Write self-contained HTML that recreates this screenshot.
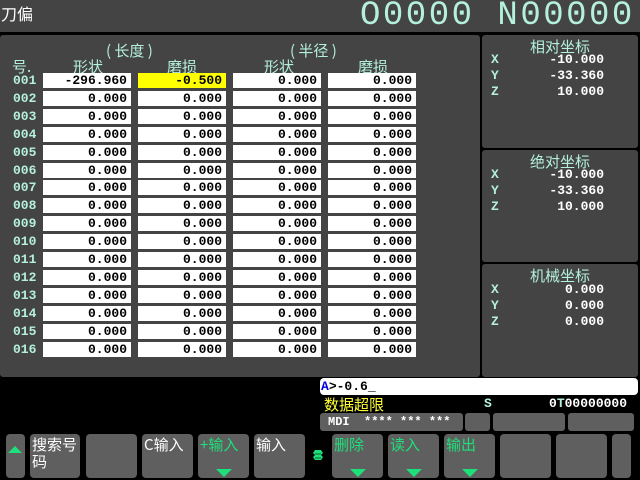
<!DOCTYPE html><html><head><meta charset="utf-8"><style>
*{margin:0;padding:0;box-sizing:border-box}
body{width:640px;height:480px;background:#000;position:relative;overflow:hidden;font-family:"Liberation Mono","WenQuanYi Zen Hei",monospace;}
.a{position:absolute}
.cj{font-family:"WenQuanYi Zen Hei","Noto Sans CJK SC",sans-serif}
.m{color:#b4f0dc}
.cell{position:absolute;height:15px;background:#fff;color:#000;font-weight:bold;font-size:13px;line-height:15px;text-align:right;padding-right:4px}
.num{position:absolute;left:13px;font-size:13px;font-weight:bold;color:#b4f0dc;line-height:15px}
.pan{position:absolute;background:#444;border-radius:3px}
.k{position:absolute;top:434px;height:44px;background:#5f5f5f;border-radius:4px;color:#fff;font-size:15px;line-height:17px;padding:2px}
.g{color:#1ee07a}
.tri{position:absolute;bottom:1px;left:50%;margin-left:-8px;width:0;height:0;border-left:8px solid transparent;border-right:8px solid transparent;border-top:8px solid #1ee07a}
.ax{position:absolute;font-size:13px;font-weight:bold;line-height:16px}
</style></head><body>
<div class="a" style="left:0;top:0;width:640px;height:32px;background:#444"></div>
<div class="a cj" style="left:1px;top:1px;color:#fff;font-size:16px">刀偏</div>
<div class="a m" style="left:360px;top:-1px;font-size:34px;letter-spacing:2.5px;line-height:34px;font-family:'Liberation Mono',monospace">O0000 N00000</div>
<div class="pan" style="left:0;top:35px;width:480px;height:342px"></div>
<div class="pan" style="left:482px;top:35px;width:156px;height:113px"></div>
<div class="pan" style="left:482px;top:150px;width:156px;height:112px"></div>
<div class="pan" style="left:482px;top:264px;width:156px;height:113px"></div>
<div class="a cj m" style="left:106px;top:40px;font-size:15px">( 长度 )</div>
<div class="a cj m" style="left:290px;top:40px;font-size:15px">( 半径 )</div>
<div class="a cj m" style="left:12px;top:56px;font-size:15px">号.</div>
<div class="a cj m" style="left:73px;top:56px;font-size:15px">形状</div>
<div class="a cj m" style="left:167px;top:56px;font-size:15px">磨损</div>
<div class="a cj m" style="left:264px;top:56px;font-size:15px">形状</div>
<div class="a cj m" style="left:358px;top:56px;font-size:15px">磨损</div>
<div id="rows"></div>
<script>
var h='';for(var i=1;i<=16;i++){var t=Math.round(73+(i-1)*17.9);var n=('00'+i).slice(-3);
h+='<div class="num" style="top:'+t+'px">'+n+'</div>';
var v=[i==1?'-296.960':'0.000',i==1?'-0.500':'0.000','0.000','0.000'];var xs=[43,138,233,328];
for(var j=0;j<4;j++)h+='<div class="cell" style="left:'+xs[j]+'px;top:'+t+'px;width:88px;'+(i==1&&j==1?'background:#ffff00':'')+'">'+v[j]+'</div>';}
document.getElementById('rows').innerHTML=h;
</script>
<div class="a cj m" style="left:530px;top:36px;font-size:15px">相对坐标</div>
<div class="a cj m" style="left:530px;top:151px;font-size:15px">绝对坐标</div>
<div class="a cj m" style="left:530px;top:265px;font-size:15px">机械坐标</div>
<div class="ax m" style="left:491px;top:52px">X<br>Y<br>Z</div>
<div class="ax" style="left:520px;top:52px;width:84px;text-align:right;color:#fff">-10.000<br>-33.360<br>10.000</div>
<div class="ax m" style="left:491px;top:167px">X<br>Y<br>Z</div>
<div class="ax" style="left:520px;top:167px;width:84px;text-align:right;color:#fff">-10.000<br>-33.360<br>10.000</div>
<div class="ax m" style="left:491px;top:282px">X<br>Y<br>Z</div>
<div class="ax" style="left:520px;top:282px;width:84px;text-align:right;color:#fff">0.000<br>0.000<br>0.000</div>
<div class="a" style="left:320px;top:378px;width:318px;height:17px;background:#fff;border-radius:4px;font-size:13px;font-weight:bold;line-height:17px;padding-left:1px"><span style="color:#0000e0">A</span>&gt;-0.6_</div>
<div class="a cj" style="left:324px;top:396px;color:#ffff33;font-size:15px;line-height:17px">数据超限</div>
<div class="a m" style="left:484px;top:396px;font-size:13px;font-weight:bold">S</div>
<div class="a" style="left:549px;top:396px;font-size:13px;font-weight:bold;color:#fff">0<span class="m">T</span>00000000</div>
<div class="a" style="left:320px;top:413px;width:143px;height:18px;background:#5f5f5f;border-radius:3px;color:#fff;font-size:12px;font-weight:bold;line-height:18px;padding-left:8px">MDI&nbsp;&nbsp;**** *** ***</div>
<div class="a" style="left:465px;top:413px;width:25px;height:18px;background:#5f5f5f;border-radius:3px"></div>
<div class="a" style="left:493px;top:413px;width:72px;height:18px;background:#5f5f5f;border-radius:3px"></div>
<div class="a" style="left:568px;top:413px;width:66px;height:18px;background:#5f5f5f;border-radius:3px"></div>
<div class="k" style="left:6px;width:19px"><div style="position:absolute;top:12px;left:2px;border-left:7px solid transparent;border-right:7px solid transparent;border-bottom:7px solid #1ee07a;width:0;height:0"></div></div>
<div class="k cj" style="left:30px;width:50px">搜索号<br>码</div>
<div class="k" style="left:86px;width:51px"></div>
<div class="k cj" style="left:142px;width:51px">C输入</div>
<div class="k cj g" style="left:198px;width:51px">+输入<div class="tri"></div></div>
<div class="k cj" style="left:254px;width:51px">输入</div>
<svg class="a" style="left:313px;top:449px" width="10" height="14" viewBox="0 0 10 14"><path d="M2 1h6l2 3-2 2 2 2-2 3 -6 0-2-3 2-2-2-2z" fill="#1ee07a"/><path d="M2 5h6M2 9h6" stroke="#0a6030" stroke-width="1"/></svg>
<div class="k cj g" style="left:332px;width:51px">删除<div class="tri"></div></div>
<div class="k cj g" style="left:388px;width:51px">读入<div class="tri"></div></div>
<div class="k cj g" style="left:444px;width:51px">输出<div class="tri"></div></div>
<div class="k" style="left:500px;width:51px"></div>
<div class="k" style="left:556px;width:51px"></div>
<div class="k" style="left:612px;width:19px"></div>
</body></html>
